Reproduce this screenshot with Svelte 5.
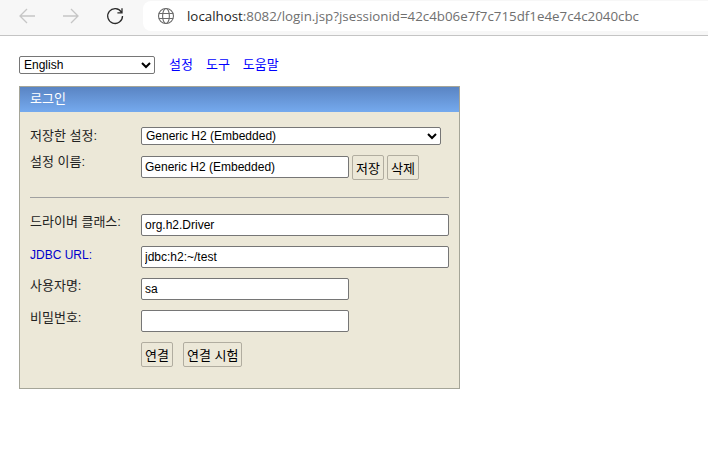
<script>
  const sessionPath = ':8082/login.jsp?jsessionid=42c4b06e7f7c715df1e4e7c4c2040cbc'
</script>

<header class="toolbar">
  <div class="nav">
    <svg width="20" height="20" viewBox="0 0 20 20" class="dim"><path d="M18 10H3M10 3l-7 7 7 7" /></svg>
    <svg width="20" height="20" viewBox="0 0 20 20" class="dim"><path d="M2 10h15M10 3l7 7-7 7" /></svg>
    <svg width="20" height="20" viewBox="0 0 20 20" class="dark"><path d="M16.4 6.2A7.4 7.4 0 1 0 17.5 10M17 2.2v4.6h-4.6" /></svg>
  </div>
  <div class="address">
    <svg width="18" height="18" viewBox="0 0 18 18" class="globe">
      <circle cx="9" cy="9" r="7.5" />
      <ellipse cx="9" cy="9" rx="3.4" ry="7.5" />
      <path d="M1.8 6.5h14.4M1.8 11.5h14.4" />
    </svg>
    <span class="url"><span class="host">localhost</span>{sessionPath}</span>
  </div>
</header>

<main class="page">
  <div class="top">
    <select class="lang">
      <option>English</option>
    </select>
    <a href="#settings">설정</a>
    <a href="#tools">도구</a>
    <a href="#help">도움말</a>
  </div>

  <section class="panel">
    <div class="title">로그인</div>
    <div class="body">
      <div class="row saved">
        <span class="label">저장한 설정:</span>
        <select class="setting">
          <option>Generic H2 (Embedded)</option>
        </select>
      </div>
      <div class="row name">
        <span class="label">설정 이름:</span>
        <div class="inline">
          <input class="short" value="Generic H2 (Embedded)" />
          <button>저장</button>
          <button>삭제</button>
        </div>
      </div>
      <hr />
      <div class="row">
        <span class="label">드라이버 클래스:</span>
        <input class="long" value="org.h2.Driver" />
      </div>
      <div class="row">
        <a class="label" href="#jdbc">JDBC URL:</a>
        <input class="long" value="jdbc:h2:~/test" />
      </div>
      <div class="row">
        <span class="label">사용자명:</span>
        <input class="short" value="sa" />
      </div>
      <div class="row">
        <span class="label">비밀번호:</span>
        <input class="short" type="password" />
      </div>
      <div class="row actions">
        <span></span>
        <div class="inline wide">
          <button>연결</button>
          <button>연결 시험</button>
        </div>
      </div>
    </div>
  </section>
</main>

<style>
  :global(body) {
    margin: 0;
    background: #fff;
    font-family: "Liberation Sans", "Noto Sans CJK KR", Arial, sans-serif;
    font-size: 12px;
    color: #000;
  }

  .toolbar {
    display: flex;
    align-items: flex-start;
    height: 35px;
    background: #f7f7f7;
    border-bottom: 1px solid #c4c4c4;
  }
  .nav {
    display: flex;
    gap: 24px;
    width: 143px;
    padding: 6px 0 0 17px;
    box-sizing: border-box;
  }
  .nav svg {
    fill: none;
    stroke-width: 1.3;
  }
  .dim { stroke: #c6c6c6; }
  .dark { stroke: #2b2b2b; }
  .address {
    flex: 1;
    display: flex;
    align-items: center;
    height: 30px;
    margin-top: 1px;
    padding-left: 14px;
    background: #fff;
    border-radius: 8px 0 0 8px;
  }
  .globe {
    fill: none;
    stroke: #6b6b6b;
    stroke-width: 1.1;
  }
  .url {
    margin-left: 12px;
    font-family: "Open Sans", "Liberation Sans", sans-serif;
    font-size: 13.33px;
    color: #6f6f6f;
    white-space: nowrap;
  }
  .host { color: #1f1f1f; }

  .page {
    padding: 20px 0 0 19px;
  }
  .top {
    display: flex;
    align-items: center;
    gap: 14px;
    height: 18px;
    margin-bottom: 12px;
  }
  .top a {
    margin-right: -1px;
    font-size: 13px;
    line-height: 16px;
    color: #0000ff;
    text-decoration: none;
  }
  .lang {
    width: 136px;
    height: 18px;
    font: inherit;
    background: #fff;
    border: 1px solid #767676;
    border-radius: 2px;
    padding: 0;
  }

  .panel {
    box-sizing: border-box;
    width: 441px;
    height: 303px;
    border: 1px solid #a5a598;
    background: #ece8d8;
  }
  .title {
    height: 25px;
    padding-left: 10px;
    font-size: 13px;
    line-height: 24px;
    color: #fff;
    background: linear-gradient(#5a84c3, #75aaee);
  }
  .body {
    padding: 15px 10px 0;
  }

  .row {
    display: grid;
    grid-template-columns: 111px 1fr;
    align-items: start;
    margin-bottom: 10px;
  }
  .row.saved { margin-bottom: 11px; }
  .row.name { margin-bottom: 0; }
  .actions { margin-bottom: 0; }
  .label {
    font-size: 13px;
    line-height: 16px;
    color: #222;
    text-decoration: none;
  }
  .saved .label { padding-top: 1px; }
  .name .label { margin-top: -2px; }
  a.label {
    padding-top: 1px;
    font-size: 12px;
    color: #0000cc;
  }

  .setting {
    width: 300px;
    height: 18px;
    font: inherit;
    background: #fff;
    border: 1px solid #767676;
    border-radius: 2px;
    padding: 0;
  }
  input {
    box-sizing: border-box;
    height: 22px;
    padding: 0 3px;
    font: inherit;
    background: #fff;
    border: 1px solid #767676;
    border-radius: 2px;
  }
  .short { width: 208px; }
  .long { width: 308px; }

  .inline {
    display: flex;
    align-items: flex-start;
    gap: 3px;
  }
  .inline.wide { gap: 10px; }
  button {
    box-sizing: border-box;
    height: 25px;
    padding: 0 3px;
    font: inherit;
    font-size: 13px;
    color: #000;
    background: #ece8d8;
    border: 1px solid #b1ada0;
    border-radius: 2px;
  }
  .name .inline { margin-top: -1px; }
  .name input { margin-top: 1px; }

  hr {
    height: 1px;
    margin: 17px 0 16px;
    border: 0;
    background: #a0a0a0;
  }
</style>
